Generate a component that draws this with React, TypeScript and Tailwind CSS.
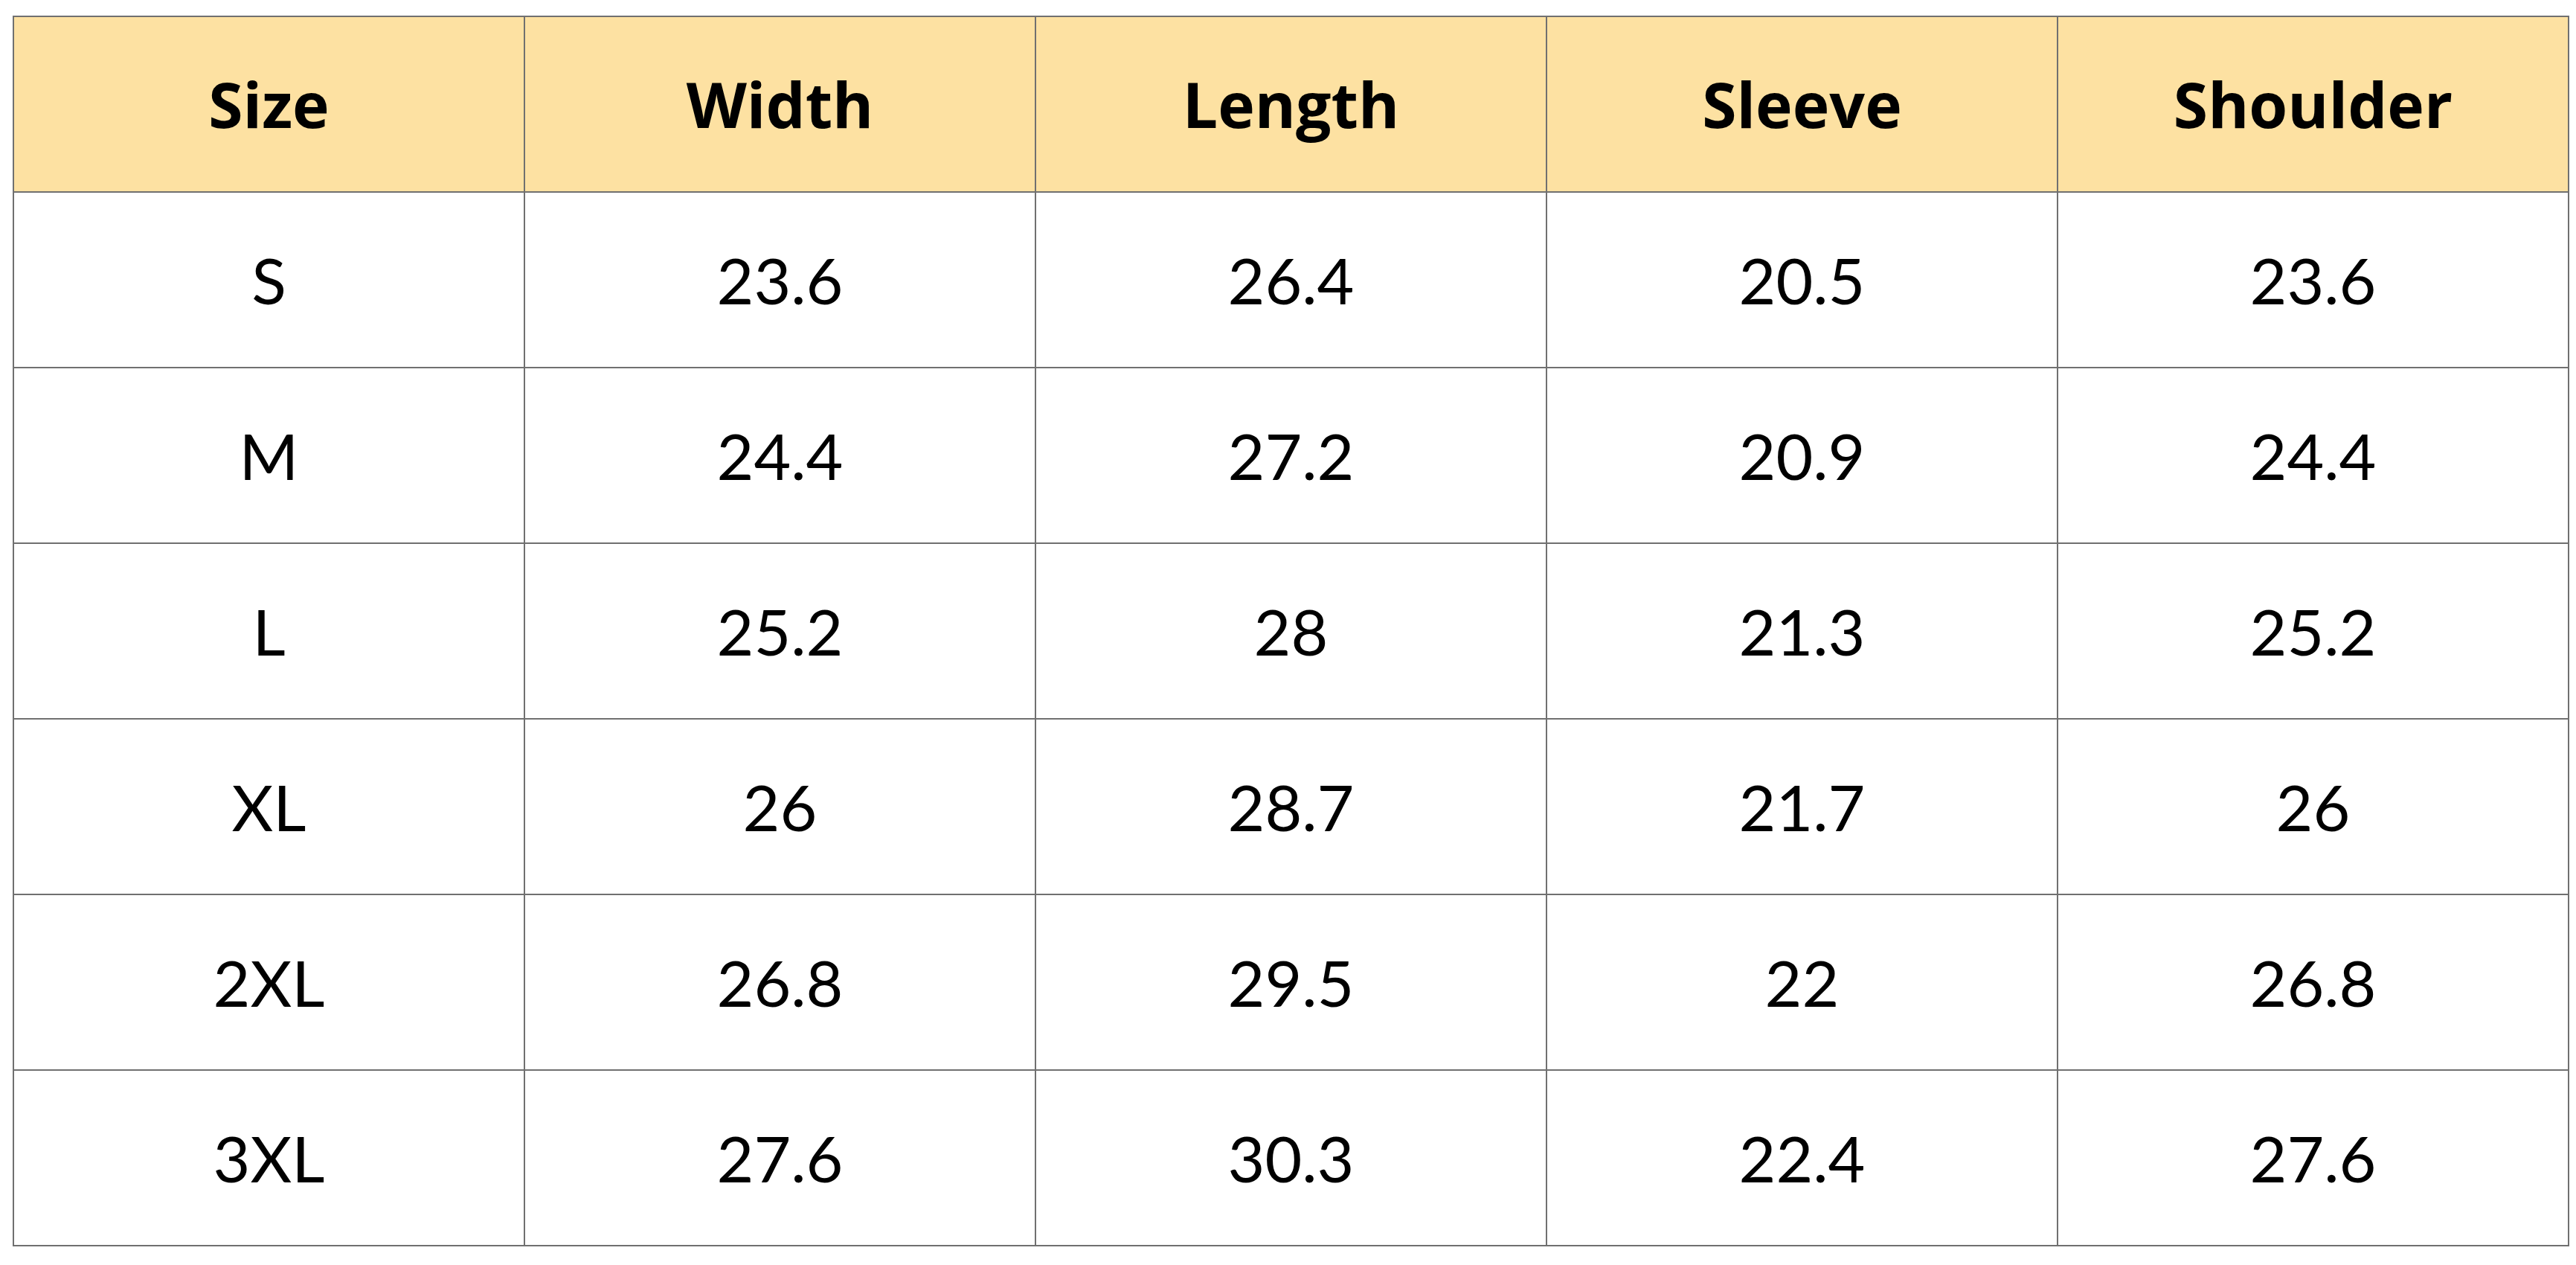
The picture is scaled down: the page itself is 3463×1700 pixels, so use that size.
import React from "react";

const headers = ["Size", "Width", "Length", "Sleeve", "Shoulder"];
const rows = [
  ["S", "23.6", "26.4", "20.5", "23.6"],
  ["M", "24.4", "27.2", "20.9", "24.4"],
  ["L", "25.2", "28", "21.3", "25.2"],
  ["XL", "26", "28.7", "21.7", "26"],
  ["2XL", "26.8", "29.5", "22", "26.8"],
  ["3XL", "27.6", "30.3", "22.4", "27.6"],
];

export default function App() {
  return (
    <div className="w-[3463px] h-[1700px] bg-white pl-[17px] pt-[21px] font-['Lato',sans-serif] text-black">
      <table className="w-[3437px] border-collapse table-fixed">
        <thead>
          <tr className="h-[236px] bg-[#fde1a2]">
            {headers.map((h) => (
              <th
                key={h}
                className="border-2 border-[#707070] font-['Open_Sans',sans-serif] text-[84px] font-bold text-center align-middle leading-none"
              >
                {h}
              </th>
            ))}
          </tr>
        </thead>
        <tbody>
          {rows.map((r, i) => (
            <tr key={i} className="h-[236px]">
              {r.map((c, j) => (
                <td
                  key={j}
                  className="border-2 border-[#707070] text-[86px] font-normal text-center align-middle leading-none"
                >
                  {c}
                </td>
              ))}
            </tr>
          ))}
        </tbody>
      </table>
    </div>
  );
}
